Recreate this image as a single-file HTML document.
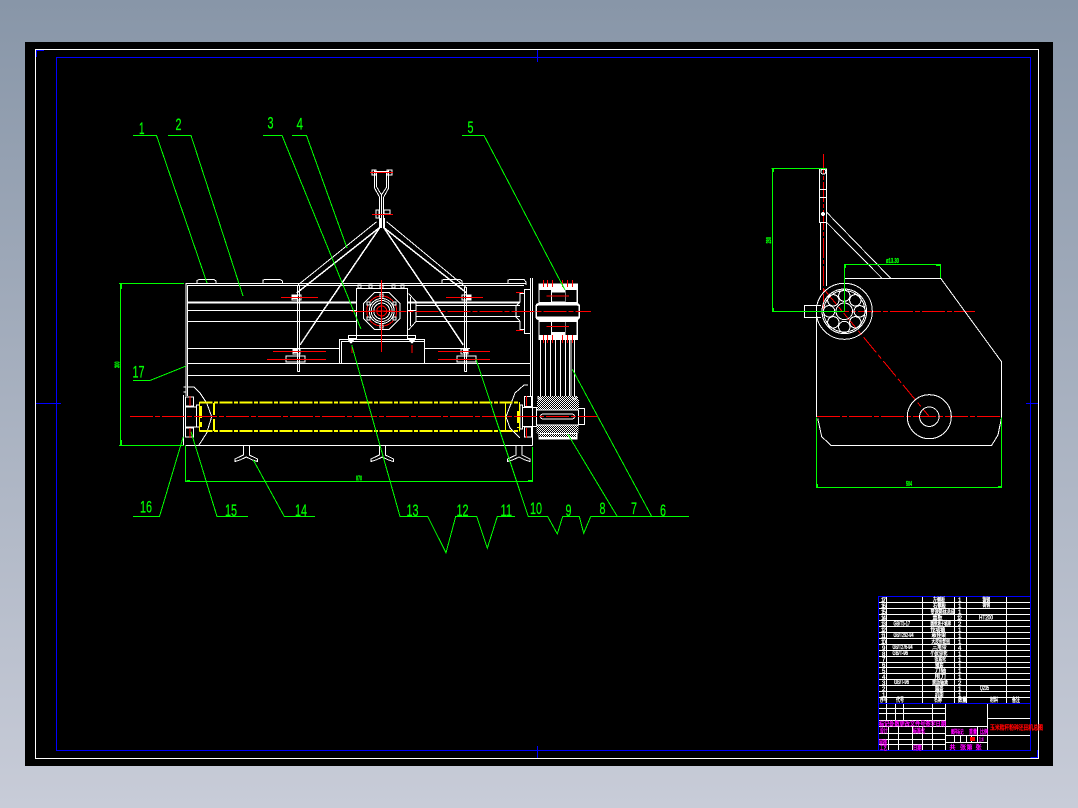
<!DOCTYPE html>
<html><head><meta charset="utf-8"><title>CAD</title>
<style>
html,body{margin:0;padding:0;width:1078px;height:808px;overflow:hidden;background:linear-gradient(#8896a8,#c8ccd8)}
svg{position:absolute;left:0;top:0;display:block;shape-rendering:crispEdges}
.g text{fill:#0f0;stroke:#0f0;stroke-width:.25;font-family:"Liberation Sans",sans-serif;font-size:17px}
.g .d text{font-size:7px;font-weight:bold;stroke-width:.3}
.t{font-family:"Liberation Sans","Noto Sans CJK SC",sans-serif;font-size:6px}
.w text{fill:#fff;stroke:#fff;stroke-width:.35}
.m text{fill:#f0f;stroke:#f0f;stroke-width:.35}
</style></head><body>
<svg width="1078" height="808" viewBox="0 0 1078 808" xmlns="http://www.w3.org/2000/svg">
<defs>
<pattern id="h" width="2" height="2" patternUnits="userSpaceOnUse"><rect width="2" height="2" fill="#000"/><rect width="1" height="1" fill="#fff"/><rect x="1" y="1" width="1" height="1" fill="#fff"/></pattern>
</defs>
<rect x="25" y="42" width="1028" height="724" fill="#000"/>
<rect x="35.5" y="49.5" width="1003" height="709" fill="none" stroke="#fff" stroke-width="1"/>
<g fill="none" stroke="#00f" stroke-width="1">
<rect x="56.5" y="57.5" width="974" height="693"/>
<path d="M36.5 57V50.5H44M1030.500 757.500H1037.500V750M36 403.500H61M537.500 746V758M537.500 50V62M1026 403.500H1038"/>
</g>

<!-- white main front view -->
<g fill="none" stroke="#fff" stroke-width="1">
<path d="M185.500 283.500H526M187.500 285.500H524M187.500 310.500H357M187.500 321.500H357M187.500 348.500H339M187.500 363.500H530M187.500 375.500H530M185.500 445.500H532.500M186 283V396M187.500 285V396"/>
<path d="M187.500 302.500H357" stroke-width="2"/>
<path d="M408 302.500H520" stroke-width="2"/>
<path d="M416 305.500H520M416 316.500H520M416 321.500H520M408 310.500H416"/>
<path d="M424 348.500H470M424 321.500H416"/>
<rect x="356.500" y="288.500" width="51" height="47"/>
<path d="M339.500 363V339.500H424.500V363M341.500 363V341.500H424"/>
<path d="M197 283V280.500L199 279.500H214L216 281V283M263 283V280L265 279.500H280L282.500 281V283M442 283V280L444 279.500H460L462 281V283M508 283V280L510 279.500H524L526 282V285"/>
<path d="M297.500 286V371.500M299.500 286V371.500H297.500M464.500 287V371.500M466.500 287V371.500H464.500"/>
<path d="M530.500 278V396M532.500 278V445.500M530.500 396V346"/>
<rect x="524.500" y="289.500" width="6" height="44"/>
<path d="M524 293.500H520V302M524 329.500H520V321M520 302L516 306V317L520 321"/>
<path d="M408.500 293.500L416 301.500V321.500L408.500 330M410.500 297V326"/>
<rect x="348.500" y="335.500" width="8" height="3"/><rect x="407.500" y="335.500" width="8" height="3"/>
<rect x="292" y="295" width="9" height="5"/><rect x="462" y="295" width="9" height="5"/>
<rect x="286" y="356" width="19" height="6"/><rect x="457" y="356" width="19" height="6"/>
<rect x="293" y="349" width="7" height="5"/><rect x="461" y="349" width="7" height="5"/>
<rect x="358" y="285" width="3" height="3"/><rect x="369" y="285" width="3" height="3"/><rect x="380" y="285" width="3" height="3"/><rect x="392" y="285" width="3" height="3"/><rect x="401" y="285" width="3" height="3"/>
</g>
<g fill="#fff"><path d="M348 340H354L351 344ZM409 340H415L412 344Z"/><rect x="292" y="295" width="5" height="4"/><rect x="466" y="295" width="5" height="5"/><rect x="293" y="349" width="5" height="4"/><rect x="463" y="349" width="5" height="4"/></g>

<!-- gearbox circle -->
<g fill="none" stroke="#fff" stroke-width="1">
<path d="M374.500 292.500L389 292.500L400 303.500L400 318.500L389 329.500L374.500 329.500L363.500 318.500L363.500 303.500Z"/>
<circle cx="381.700" cy="311" r="12.500"/><circle cx="381.700" cy="311" r="10.500"/><circle cx="381.700" cy="311" r="8"/>
</g>
<circle cx="381.700" cy="311" r="15" fill="none" stroke="#f00" stroke-width="1"/>
<circle cx="381.700" cy="311" r="5" fill="none" stroke="#f00" stroke-width="1"/>
<g fill="#000" stroke="#fff" stroke-width="1"><rect x="380" y="294" width="3" height="3"/><rect x="380" y="325" width="3" height="3"/><rect x="367" y="302" width="3" height="3"/><rect x="393" y="302" width="3" height="3"/><rect x="367" y="317" width="3" height="3"/><rect x="393" y="317" width="3" height="3"/></g>

<!-- hitch -->
<g fill="none" stroke="#fff" stroke-width="1">
<path d="M374.500 170V188L379.500 197V228M376.700 172V187L381.500 195L386.700 187V172M388.700 170V188L383.700 197V228M381.500 195V228M374 171.500H389M381.700 197V212"/>
<rect x="372" y="170" width="4" height="5"/><rect x="387" y="170" width="5" height="5"/>
<rect x="376" y="210" width="3" height="8"/><rect x="384" y="210" width="6" height="4"/>
<path d="M376.700 221.700L298 285M386.700 221.700L466.700 288"/>
</g>
<g fill="none" stroke="#fff" stroke-width="1.500">
<path d="M379 228L296.700 293M384.300 228L466.700 293M379.500 228L310 330L300 345M384 228L453.300 330L463.300 345"/>
</g>
<rect x="379" y="218" width="2" height="10" fill="#fff"/><rect x="383" y="218" width="2" height="10" fill="#fff"/>

<!-- left bearing -->
<g fill="none" stroke="#fff" stroke-width="1">
<path d="M188 387H194L200 393L206.700 403L211.700 416.700L206.700 433L199 445"/>
<path d="M183.500 395V445M183.500 387H186V392H183.500"/>
<rect x="185.500" y="397" width="8" height="9"/><rect x="185.500" y="428" width="8" height="9"/>
<rect x="185.500" y="407" width="11" height="20"/><rect x="196.500" y="405" width="3" height="22"/>
<path d="M528 385H524L515 393L506 416.700L510 428L520 438"/>
<rect x="524.500" y="396.500" width="7" height="10"/><rect x="524.500" y="427" width="7" height="10"/>
<rect x="522.500" y="407.500" width="14" height="19"/><rect x="520" y="405" width="2.500" height="24"/>
</g>

<!-- feet -->
<g fill="none" stroke="#fff" stroke-width="1">
<path d="M243.300 446V455L235 459V461.500L240 460L246.300 457L252.500 460L257.500 461.500V459L249.300 455V446"/>
<path d="M379.300 446V455L371 459V461.500L376 460L382.300 457L388.500 460L393.500 461.500V459L385.300 455V446"/>
<path d="M516 446V455L507.500 459V461.500L512.500 460L519 457L525 460L530 461.500V459L522 455V446"/>
</g>

<!-- pulley -->
<rect x="538.300" y="283.300" width="39.500" height="56.500" fill="#fff"/>
<g fill="#000">
<rect x="539.500" y="290" width="11.500" height="12"/><rect x="552" y="292.700" width="13" height="9"/><rect x="565.500" y="290" width="11" height="12"/>
<rect x="539.500" y="322" width="11.500" height="13"/><rect x="552" y="322" width="13" height="10"/><rect x="565.500" y="322" width="11" height="13"/>
</g>
<rect x="535.500" y="303" width="44.500" height="17" rx="3" fill="#fff"/>
<rect x="537" y="305.700" width="41.500" height="11" rx="1" fill="#000"/>
<g stroke="#fff" stroke-width="1" fill="none">
<path d="M540.500 340V396M545.500 340V396M550.500 340V396M555.500 340V396M560.500 340V396M565.500 340V396M569.500 340V396M574.500 340V396"/>
<path d="M571 340V396"/>
<rect x="578.500" y="408.500" width="6" height="16"/>
</g>
<rect x="538" y="396" width="40" height="4" fill="url(#h)"/>
<rect x="537" y="400" width="42" height="10" fill="url(#h)"/>
<rect x="536.500" y="425" width="42" height="8.500" fill="url(#h)"/>
<rect x="538.500" y="433" width="39" height="6.500" fill="#fff"/>
<rect x="539" y="434" width="37" height="3" fill="url(#h)"/>
<rect x="536.500" y="410" width="42" height="15" fill="none" stroke="#fff" stroke-width="1"/>
<rect x="540.500" y="414" width="34" height="5" rx="2.500" fill="none" stroke="#fff" stroke-width="1"/>
<path d="M538 396V399H541V397M576 396V399H573V397" stroke="#fff" fill="none"/>

<!-- yellow roller -->
<g fill="none" stroke="#ff0">
<path d="M199.500 402.700H519.300M199.500 431.200H519.300" stroke-width="2" stroke-dasharray="13 1.500 4 1.500"/>
<path d="M199.500 402V431.500M519.300 402V431.500M505.300 402V431.500" stroke-width="1"/>
<path d="M201 406V427M518 411V428M214 403V431" stroke-width="2" stroke-dasharray="12 4"/>
</g>

<!-- red -->
<g fill="none" stroke="#f00" stroke-width="1">
<path d="M130 416.500H597M351.700 311.500H591M817 416.700H1001M826 311.500H975" stroke-dasharray="23 2 5 2"/>
<path d="M823.500 154V311" stroke-dasharray="20 2 4 2"/>
<path d="M824 289.300L929.300 416.700" stroke-dasharray="20 3 5 3"/>
<path d="M281 297.500H318M446 297.500H483M273 351.500H326M267 359.500H326M438 351.500H490M438 359.500H490M372 214.500H393M370 172.500H393M381.700 280V352M352 345V353M412 345V353M516 292.500H523M516 330.500H523M546.700 296H569M546.700 326.300H569M543.300 280V287M547.700 280V287M552.300 280V287M562.300 280V287M567.300 280V287M572.300 280V287M543.300 335V343M547.700 335V343M552.300 335V343M562.300 335V343M567.300 335V343M572.300 335V343M190 396V406M190 428V438M526.700 396V406M526.700 428V438"/>
<path d="M372 311H392"/>
</g>

<!-- side view white -->
<g fill="none" stroke="#fff" stroke-width="1">
<path d="M844.300 278.300H940.700L1001.700 362V416.700L998 435L991.700 445.300H831L821.700 436.700L817.700 418.300M816.500 313V417"/>
<circle cx="844.300" cy="311.300" r="28"/><circle cx="844.300" cy="311.300" r="22.300"/><circle cx="844.300" cy="311.300" r="20.700"/><circle cx="844.300" cy="311.300" r="8.300"/>
<circle cx="844.300" cy="295.700" r="5.700"/><circle cx="855.300" cy="300.300" r="5.700"/><circle cx="859.700" cy="311.300" r="5.700"/><circle cx="855.300" cy="322.300" r="5.700"/><circle cx="844.300" cy="327" r="5.700"/><circle cx="833.300" cy="322.300" r="5.700"/><circle cx="829" cy="311.300" r="5.700"/><circle cx="833.300" cy="300.300" r="5.700"/>
<circle cx="929.300" cy="416.700" r="22"/><circle cx="929.300" cy="416.700" r="9.700"/>
<rect x="819.500" y="169" width="7" height="53.500"/><path d="M819.500 189.500H826.500M819.500 197.500H826.500M820.700 222.500V290M826.300 222.500V286"/>
<circle cx="823.300" cy="171.700" r="2.500"/>
<path d="M826.700 212.300L890.700 278.300M826 221.700L882 278.300"/>
<path d="M821 305.500H804.500V317.500H821"/>
</g>
<circle cx="823" cy="214" r="2" fill="#fff"/>

<!-- green -->
<g fill="none" stroke="#0f0" stroke-width="1">
<path d="M133 135.500H156.500L207 283M168 135.500H191L243 296M263 135.500H282L361 329M292 135.500H306.500L347 248M462 135.500H484L565 290"/>
<path d="M120.500 283V445.500M119 283.500H184M119 445.500H184M185.500 446V481.500H532.500V447"/>
<path d="M133 380.500H150L186 366M133 516.500H159.500L183.300 436.700M248 516.500H217L191 431.700M315 516.500H284.300L253.300 460"/>
<path d="M351.700 345L400 516.500H427.700L446 552.700L455.700 516.500H476.700L487.300 548.300L497.300 516.500H515"/>
<path d="M476 359.300L528.300 516.500H547.700L557.300 534L562.700 516.500H579.300L583.700 533.300L590.700 516.500H689"/>
<path d="M567.700 434L617.300 516.500M572.300 369.300L651.700 516.500"/>
<path d="M771.500 168.500H826M772.500 168V311.500M772 311.500H844M844.500 264V311.500M844.500 264.500H940.500V278M816.500 417.500V487.500H1001.500V417.500"/>
<path d="M121.500 284V289M121.500 440V445M186.500 480.500H190M528 480.500H532M773.500 169V172M773.500 308V311M845.500 265V268M936 265.500H940M817.500 484V487M998 486.500H1001"/>
</g>
<g class="g">
<text x="139" y="134" textLength="5.500" lengthAdjust="spacingAndGlyphs">1</text>
<text x="175.500" y="130" textLength="6" lengthAdjust="spacingAndGlyphs">2</text>
<text x="267.500" y="128.500" textLength="6" lengthAdjust="spacingAndGlyphs">3</text>
<text x="296.500" y="129.500" textLength="6.500" lengthAdjust="spacingAndGlyphs">4</text>
<text x="467.500" y="133" textLength="6" lengthAdjust="spacingAndGlyphs">5</text>
<text x="132.500" y="377.500" textLength="12" lengthAdjust="spacingAndGlyphs">17</text>
<text x="140" y="512.500" textLength="12" lengthAdjust="spacingAndGlyphs">16</text>
<text x="225" y="516" textLength="12" lengthAdjust="spacingAndGlyphs">15</text>
<text x="295" y="516" textLength="12" lengthAdjust="spacingAndGlyphs">14</text>
<text x="406.500" y="516" textLength="12" lengthAdjust="spacingAndGlyphs">13</text>
<text x="456.500" y="516" textLength="12" lengthAdjust="spacingAndGlyphs">12</text>
<text x="500.500" y="516" textLength="11.500" lengthAdjust="spacingAndGlyphs">11</text>
<text x="530" y="514" textLength="12" lengthAdjust="spacingAndGlyphs">10</text>
<text x="565.500" y="516" textLength="6" lengthAdjust="spacingAndGlyphs">9</text>
<text x="599.500" y="514" textLength="6" lengthAdjust="spacingAndGlyphs">8</text>
<text x="631" y="514" textLength="6" lengthAdjust="spacingAndGlyphs">7</text>
<text x="660" y="516" textLength="6" lengthAdjust="spacingAndGlyphs">6</text>
<g class="d">
<text x="356" y="480.500" textLength="6" lengthAdjust="spacingAndGlyphs">870</text>
<text x="906" y="486" textLength="6" lengthAdjust="spacingAndGlyphs">504</text>
<text x="886" y="263" textLength="13" lengthAdjust="spacingAndGlyphs">ø13.30</text>
<text transform="translate(771 243.500) rotate(-90)" textLength="6.500" lengthAdjust="spacingAndGlyphs">280</text>
<text transform="translate(119.500 368) rotate(-90)" textLength="6.500" lengthAdjust="spacingAndGlyphs">300</text>
</g>
</g>

<!-- title block lines -->
<g fill="none" stroke="#fff" stroke-width="1">
<path d="M879 602.500H1030M879 608.500H1030M879 614.500H1030M879 620.500H1030M879 626.500H1030M879 632.500H1030M879 638.500H1030M879 644.500H1030M879 650.500H1030M879 656.500H1030M879 662.500H1030M879 667.500H1030M879 673.500H1030M879 679.500H1030M879 685.500H1030M879 691.500H1030M879 697.500H1030"/>
<path d="M886.500 596V703M922.500 596V703M954.500 596V703M966.500 596V703M1006.500 596V703"/>
<path d="M945.500 703V750M987.500 703V750M987 718.500H1030M945 726.500H987M945 735.500H1030M945 742.500H987"/>
<path d="M954.500 735V743M960.500 735V743M966.500 735V743M971.500 735V743M977.500 727V743"/>
<path d="M879 708.500H945M879 713.500H945M879 720.500H945M879 726.500H945M879 733.500H945M879 739.500H945M879 744.500H945"/>
<path d="M886.500 703V720M895.500 703V720M903.500 703V720M932.500 703V750M888.500 727V750M898.500 727V750M912.500 727V750M922.500 727V750"/>
</g>
<g fill="none" stroke="#00f" stroke-width="1">
<path d="M878.500 750V596.500H1030.500M878.500 703.500H1030.500"/>
</g>

<!-- title block text -->
<g class="w t">
<text x="881" y="602" textLength="5">17</text><text x="881" y="608" textLength="5">16</text><text x="881" y="614" textLength="5">15</text><text x="881" y="620" textLength="5">14</text><text x="881" y="626" textLength="5">13</text><text x="881" y="632" textLength="5">12</text><text x="881" y="638" textLength="5">11</text><text x="881" y="644" textLength="5">10</text><text x="882" y="650" textLength="3">9</text><text x="882" y="656" textLength="3">8</text><text x="882" y="661.500" textLength="3">7</text><text x="882" y="667" textLength="3">6</text><text x="882" y="673" textLength="3">5</text><text x="882" y="679" textLength="3">4</text><text x="882" y="685" textLength="3">3</text><text x="882" y="691" textLength="3">2</text><text x="882" y="697" textLength="3">1</text>
<text x="893.500" y="625.500" textLength="16.500" lengthAdjust="spacingAndGlyphs">GB/T5-17</text>
<text x="893.500" y="637" textLength="20" lengthAdjust="spacingAndGlyphs">GB/T292-94</text>
<text x="892.500" y="649" textLength="20" lengthAdjust="spacingAndGlyphs">GB/T276-94</text>
<text x="892.500" y="655" textLength="15.500" lengthAdjust="spacingAndGlyphs">GB/T-96</text>
<text x="894" y="684" textLength="15" lengthAdjust="spacingAndGlyphs">GB/T-96</text>
<text x="933" y="602" textLength="12" lengthAdjust="spacingAndGlyphs">左侧板</text>
<text x="933" y="608" textLength="13" lengthAdjust="spacingAndGlyphs">右侧板</text>
<text x="930.500" y="614" textLength="24.500" lengthAdjust="spacingAndGlyphs">变速箱体总成</text>
<text x="932.500" y="619.500" textLength="10" lengthAdjust="spacingAndGlyphs">盖板</text>
<text x="930.500" y="625.500" textLength="20.500" lengthAdjust="spacingAndGlyphs">圆锥滚子轴承</text>
<text x="930.500" y="631.500" textLength="14.500" lengthAdjust="spacingAndGlyphs">传动轴</text>
<text x="931.500" y="637" textLength="14.500" lengthAdjust="spacingAndGlyphs">悬挂架</text>
<text x="931.500" y="643.500" textLength="18.500" lengthAdjust="spacingAndGlyphs">大皮带轮组</text>
<text x="932.500" y="649" textLength="14" lengthAdjust="spacingAndGlyphs">三角带</text>
<text x="930.500" y="655" textLength="17" lengthAdjust="spacingAndGlyphs">小皮带轮</text>
<text x="934.500" y="661" textLength="11.500" lengthAdjust="spacingAndGlyphs">张紧轮</text>
<text x="935" y="667" textLength="8.500" lengthAdjust="spacingAndGlyphs">轴套</text>
<text x="934.500" y="673" textLength="11.500" lengthAdjust="spacingAndGlyphs">刀轴</text>
<text x="934.500" y="679" textLength="11.500" lengthAdjust="spacingAndGlyphs">甩刀</text>
<text x="932" y="685" textLength="16" lengthAdjust="spacingAndGlyphs">滚动轴承</text>
<text x="935" y="691" textLength="8.500" lengthAdjust="spacingAndGlyphs">端盖</text>
<text x="935" y="697" textLength="8.500" lengthAdjust="spacingAndGlyphs">机架</text>
<text x="958" y="602" textLength="3">1</text><text x="958" y="608" textLength="3">1</text><text x="958" y="614" textLength="3">1</text><text x="957" y="620" textLength="5">12</text><text x="958" y="626" textLength="3">2</text><text x="958" y="632" textLength="3">1</text><text x="958" y="638" textLength="3">1</text><text x="958" y="644" textLength="3">1</text><text x="958" y="650" textLength="3">4</text><text x="958" y="656" textLength="3">1</text><text x="958" y="662" textLength="3">1</text><text x="958" y="668" textLength="3">1</text><text x="958" y="673" textLength="3">1</text><text x="958" y="679" textLength="3">1</text><text x="958" y="685" textLength="3">2</text><text x="958" y="691" textLength="3">1</text><text x="958" y="697" textLength="3">1</text>
<text x="982.500" y="602" textLength="7.500" lengthAdjust="spacingAndGlyphs">铸钢</text>
<text x="982.500" y="607" textLength="7.500" lengthAdjust="spacingAndGlyphs">铸钢</text>
<text x="979" y="619.500" textLength="14" lengthAdjust="spacingAndGlyphs">HT200</text>
<text x="980" y="690" textLength="9" lengthAdjust="spacingAndGlyphs">Q235</text>
<text x="880" y="702" textLength="7.500" lengthAdjust="spacingAndGlyphs">序号</text>
<text x="896" y="702" textLength="8" lengthAdjust="spacingAndGlyphs">代号</text>
<text x="934" y="702" textLength="8" lengthAdjust="spacingAndGlyphs">名称</text>
<text x="958" y="702" textLength="8.500" lengthAdjust="spacingAndGlyphs">数量</text>
<text x="990" y="702" textLength="8" lengthAdjust="spacingAndGlyphs">材料</text>
<text x="1012" y="702" textLength="8" lengthAdjust="spacingAndGlyphs">备注</text>
</g>
<g class="m t">
<text x="879" y="726" textLength="67" lengthAdjust="spacingAndGlyphs">标记处数更改文件号签字日期</text>
<text x="880" y="733" textLength="7.500" lengthAdjust="spacingAndGlyphs">设计</text>
<text x="912.700" y="733" textLength="12.500" lengthAdjust="spacingAndGlyphs">标准化</text>
<text x="879" y="744.500" textLength="8" lengthAdjust="spacingAndGlyphs">审核</text>
<text x="880" y="750" textLength="7" lengthAdjust="spacingAndGlyphs">工艺</text>
<text x="913" y="750" textLength="8.500" lengthAdjust="spacingAndGlyphs">日期</text>
<text x="951" y="734" textLength="12.500" lengthAdjust="spacingAndGlyphs">图样标记</text>
<text x="969" y="734" textLength="8" lengthAdjust="spacingAndGlyphs">重量</text>
<text x="980" y="734" textLength="8" lengthAdjust="spacingAndGlyphs">比例</text>
<text x="979" y="741.500" textLength="4.500" lengthAdjust="spacingAndGlyphs">1:4</text>
<text x="949.500" y="749.500" textLength="4">共</text><text x="960" y="749.500" textLength="4">张</text><text x="966.500" y="749.500" textLength="4">第</text><text x="975.500" y="749.500" textLength="4">张</text>
</g>
<rect x="970" y="737" width="5" height="4" fill="#f00"/>
<text x="990" y="729.500" textLength="53" lengthAdjust="spacingAndGlyphs" font-family="'Liberation Sans','Noto Sans CJK SC',sans-serif" font-size="6.500" fill="#f00" stroke="#f00" stroke-width=".4">玉米秸秆粉碎还田机总图</text>
</svg>
</body></html>
